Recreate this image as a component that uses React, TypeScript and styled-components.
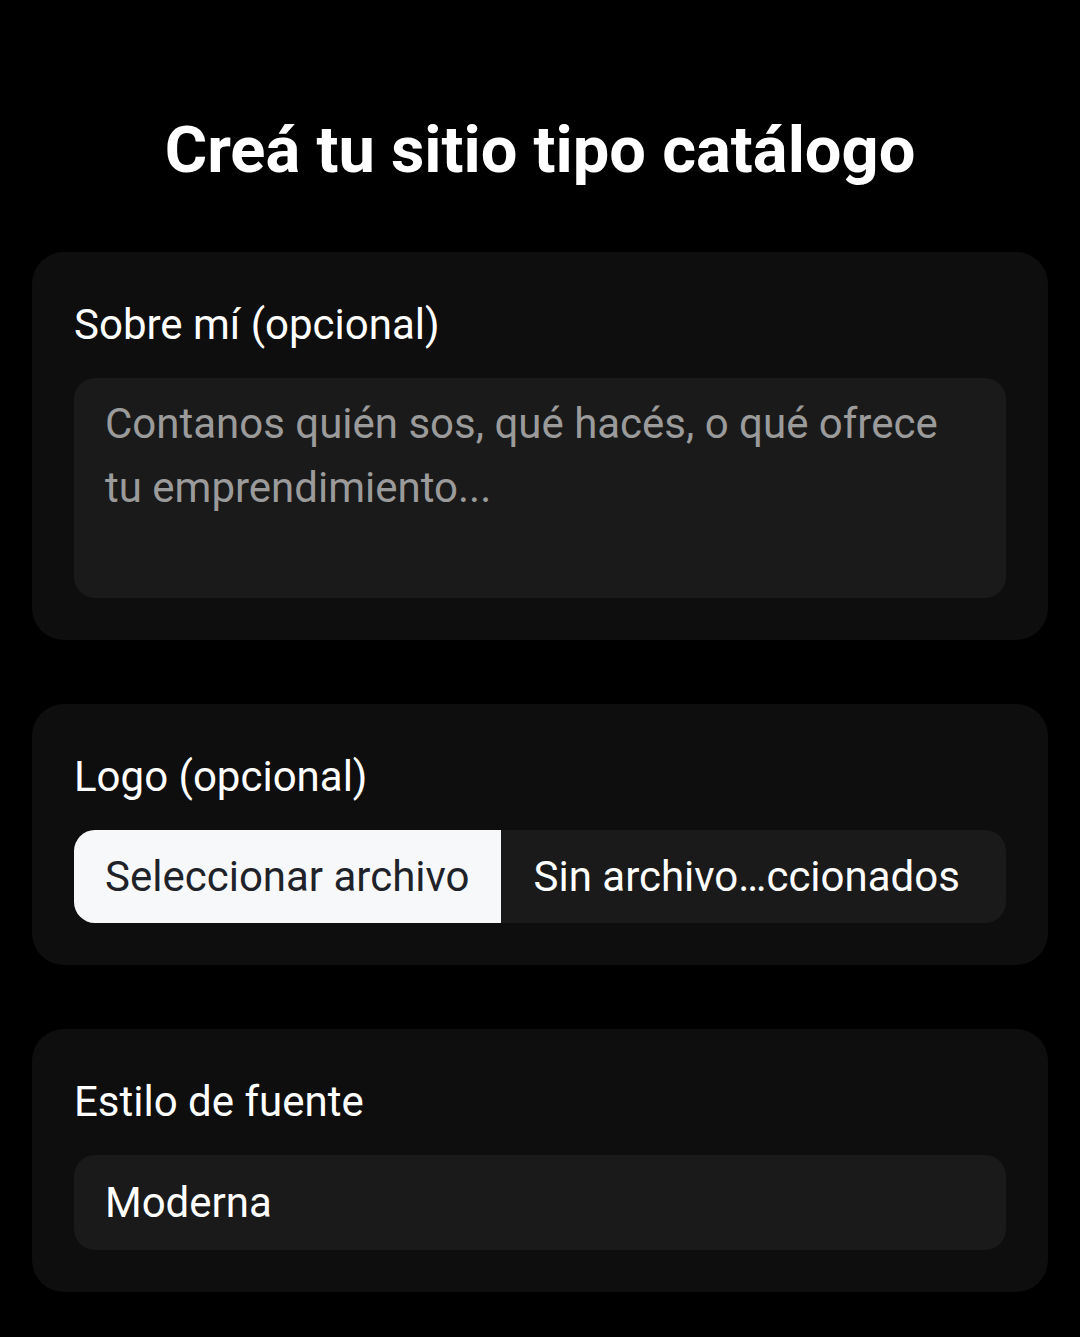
import React from "react";
import styled, { createGlobalStyle } from "styled-components";

const GlobalStyle = createGlobalStyle`
  * { box-sizing: border-box; }
  html, body {
    margin: 0;
    padding: 0;
    background: #000000;
  }
  body {
    font-family: Roboto, "Noto Sans", "Liberation Sans", sans-serif;
    color: #ffffff;
  }
`;

const Page = styled.main`
  min-height: 1337px;
  background: #000000;
  padding: 113px 32px 46px;
  display: flex;
  flex-direction: column;
  gap: 64px;
`;

const Title = styled.h1`
  margin: 0;
  font-size: 65px;
  font-weight: 700;
  line-height: 75px;
  text-align: center;
  color: #ffffff;
`;

const Cards = styled.div`
  display: flex;
  flex-direction: column;
  gap: 64px;
`;

const Card = styled.section`
  background: #0e0e0e;
  border-radius: 32px;
  padding: 41px 42px 42px;
  display: flex;
  flex-direction: column;
  gap: 22px;
`;

const Label = styled.label`
  font-size: 42px;
  line-height: 63px;
  font-weight: 400;
  color: #ffffff;
`;

const TextArea = styled.textarea`
  display: block;
  width: 100%;
  height: 220px;
  resize: none;
  border: none;
  outline: none;
  border-radius: 21px;
  background: #1a1a1a;
  padding: 14px 32px 14px 31px;
  font-family: inherit;
  font-size: 42px;
  line-height: 64px;
  color: #ffffff;
  &::placeholder {
    color: #9b9b9b;
  }
`;

const FileField = styled.div`
  display: flex;
  height: 93px;
  border-radius: 21px;
  overflow: hidden;
  background: #1a1a1a;
`;

const FileButton = styled.span`
  display: flex;
  align-items: center;
  padding: 0 31px;
  background: #f7f8fa;
  color: #1f2329;
  font-size: 42px;
  white-space: nowrap;
`;

const FileName = styled.span`
  display: flex;
  align-items: center;
  padding: 0 33px;
  color: #ffffff;
  font-size: 42px;
  white-space: nowrap;
`;

const Select = styled.select`
  display: block;
  width: 100%;
  height: 95px;
  appearance: none;
  -webkit-appearance: none;
  border: none;
  outline: none;
  border-radius: 21px;
  background: #1a1a1a;
  padding: 0 31px;
  font-family: inherit;
  font-size: 42px;
  color: #ffffff;
`;

export default function App() {
  return (
    <>
      <GlobalStyle />
      <Page>
        <Title>Creá tu sitio tipo catálogo</Title>
        <Cards>
          <Card>
            <Label htmlFor="about">Sobre mí (opcional)</Label>
            <TextArea
              id="about"
              placeholder="Contanos quién sos, qué hacés, o qué ofrece tu emprendimiento..."
            />
          </Card>
          <Card>
            <Label>Logo (opcional)</Label>
            <FileField>
              <FileButton>Seleccionar archivo</FileButton>
              <FileName>Sin archivo…ccionados</FileName>
            </FileField>
          </Card>
          <Card>
            <Label htmlFor="font">Estilo de fuente</Label>
            <Select id="font" defaultValue="moderna">
              <option value="moderna">Moderna</option>
              <option value="clasica">Clásica</option>
            </Select>
          </Card>
        </Cards>
      </Page>
    </>
  );
}
